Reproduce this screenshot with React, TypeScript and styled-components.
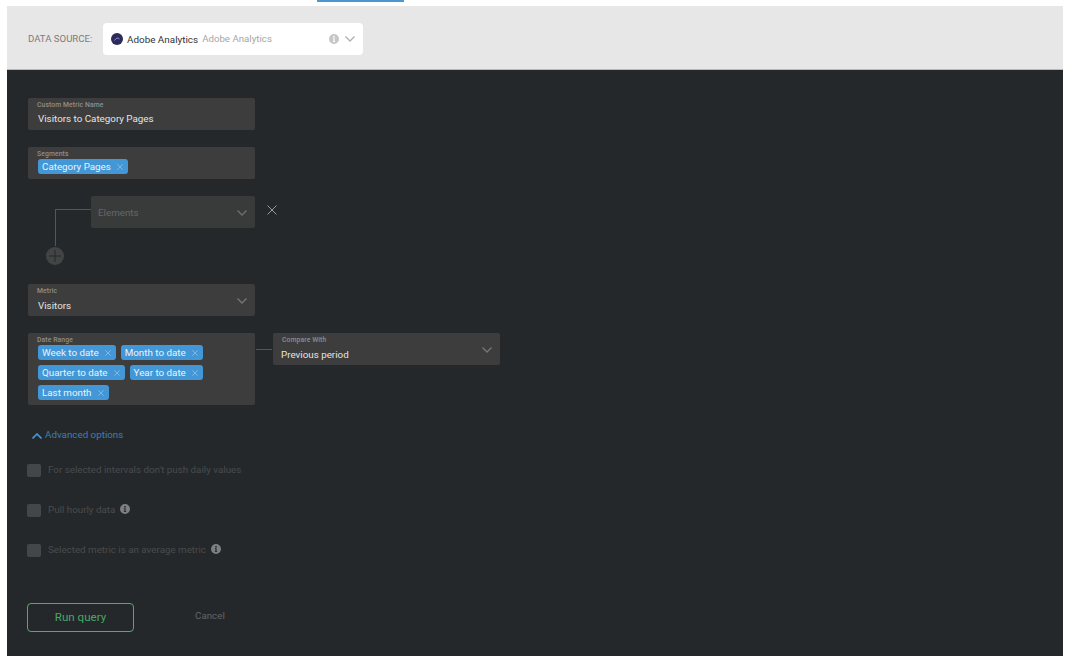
import React from 'react'
import styled, { createGlobalStyle } from 'styled-components'

const GlobalStyle = createGlobalStyle`
  html, body {
    margin: 0;
    padding: 0;
    background: #fff;
    font-family: Roboto, 'Liberation Sans', sans-serif;
  }
  * { box-sizing: border-box; }
`

const Page = styled.div`
  width: 1070px;
  height: 658px;
  overflow: hidden;
  position: relative;
  padding: 6px 7px 2px;
`

const TopTab = styled.div`
  position: absolute;
  left: 317px;
  top: 0;
  width: 87px;
  height: 2px;
  background: #4a98d3;
`

const Panel = styled.div`
  height: 650px;
  display: flex;
  flex-direction: column;
`

const SourceBar = styled.div`
  height: 64px;
  flex-shrink: 0;
  background: #e7e7e7;
  border-bottom: 1px solid #b9b9b9;
  display: flex;
  align-items: center;
  padding: 2px 0 0 21px;
`

const SourceLabel = styled.span`
  width: 75px;
  font-size: 9.6px;
  color: #7c7c7c;
`

const SourceSelect = styled.div`
  width: 260px;
  height: 32px;
  background: #fff;
  border-radius: 4px;
  display: flex;
  align-items: center;
  padding: 0 8px;
`

const SourceLogo = styled.svg`
  width: 12px;
  height: 12px;
  flex-shrink: 0;
  margin-right: 4px;
`

const SourceName = styled.span`
  font-size: 9.9px;
  color: #333;
  margin-top: 1px;
`

const SourceHint = styled.span`
  font-size: 9.7px;
  color: #a6a6a6;
  margin-left: 4px;
  flex: 1;
`

const SourceCaret = styled.svg`
  width: 10px;
  height: 6px;
  fill: none;
  stroke: #b0b0b0;
  stroke-width: 1.3;
`

const Body = styled.div`
  flex: 1;
  background: #25282b;
  padding: 28px 21px 0;
  display: flex;
  flex-direction: column;
  align-items: flex-start;
`

const Field = styled.div<{ $width?: number; $height?: number; $muted?: boolean }>`
  position: relative;
  width: ${({ $width }) => $width ?? 227}px;
  height: ${({ $height }) => $height ?? 32}px;
  background: ${({ $muted }) => ($muted ? '#393b3b' : '#3d3d3d')};
  border-radius: 2px;
  padding: 3px 10px 0 9px;
  flex-shrink: 0;
`

const FieldLabel = styled.div`
  font-size: 6.8px;
  line-height: 8px;
  font-weight: 500;
  letter-spacing: 0.1px;
  color: #8e8e8e;
`

const FieldValue = styled.div<{ $top?: number; $left?: number }>`
  font-size: 9.8px;
  line-height: 12px;
  color: #e4e4e4;
  margin-top: ${({ $top }) => $top ?? 5}px;
  margin-left: ${({ $left }) => $left ?? 1}px;
`

const Placeholder = styled.div`
  font-size: 9.8px;
  line-height: 12px;
  color: #666;
  margin-top: 8px;
  margin-left: -2px;
`

const Chips = styled.div`
  display: flex;
  flex-wrap: wrap;
  gap: 5px;
  margin-top: 1px;
  margin-left: 1px;
`

const Chip = styled.span`
  height: 15px;
  border-radius: 3px;
  background: #4497d6;
  color: #eaf3fa;
  font-size: 9.8px;
  line-height: 15px;
  padding: 0 5px 0 4px;
  display: inline-flex;
  align-items: center;
  gap: 6px;
  white-space: nowrap;
`

const ChipClose = styled.svg`
  width: 6px;
  height: 6px;
  stroke: #7fb8e3;
  stroke-width: 1;
  fill: none;
`

const Caret = styled.svg<{ $dim?: boolean }>`
  position: absolute;
  right: 8px;
  top: 14px;
  width: 10px;
  height: 6px;
  fill: none;
  stroke: ${({ $dim }) => ($dim ? '#6f6f6f' : '#777')};
  stroke-width: 1.3;
`

const ElementsBlock = styled.div`
  position: relative;
  margin-top: 17px;
  width: 260px;
  height: 71px;
  padding-left: 63px;
  display: flex;
  align-items: flex-start;
`

const BranchLine = styled.div`
  position: absolute;
  left: 27px;
  top: 13px;
  width: 36px;
  height: 37px;
  border-left: 1px solid #54575a;
  border-top: 1px solid #54575a;
`

const AddButton = styled.div`
  position: absolute;
  left: 18px;
  top: 51px;
  width: 18px;
  height: 18px;
  border-radius: 50%;
  background: #434445;
  display: flex;
  align-items: center;
  justify-content: center;
`

const PlusIcon = styled.svg`
  width: 12px;
  height: 12px;
  stroke: #25282b;
  stroke-width: 1;
`

const RemoveIcon = styled.svg`
  position: absolute;
  left: 239px;
  top: 9px;
  width: 10px;
  height: 10px;
  stroke: #9a9a9a;
  stroke-width: 1;
  fill: none;
`

const CompareRow = styled.div`
  display: flex;
  align-items: flex-start;
  margin-top: 17px;
`

const CompareLink = styled.div`
  width: 18px;
  height: 1px;
  margin-top: 16px;
  padding: 0 1px;
  &::after {
    content: '';
    display: block;
    height: 1px;
    background: #54575a;
  }
`

const Gap = styled.div<{ $size: number }>`
  height: ${({ $size }) => $size}px;
  flex-shrink: 0;
`

const AdvancedToggle = styled.div`
  margin-top: 23px;
  margin-left: 4px;
  height: 14px;
  display: flex;
  align-items: center;
  gap: 3px;
  font-size: 9.8px;
  line-height: 14px;
  color: #3d7fb2;
`

const AdvancedCaret = styled.svg`
  width: 10px;
  height: 6px;
  fill: none;
  stroke: #4497d6;
  stroke-width: 1.6;
  margin-top: 2px;
`

const Options = styled.div`
  margin-top: 21px;
  margin-left: -1px;
  display: flex;
  flex-direction: column;
  gap: 26px;
`

const Option = styled.div`
  display: flex;
  align-items: center;
  height: 14px;
`

const CheckBox = styled.span`
  width: 14px;
  height: 13px;
  border-radius: 2px;
  background: #44474a;
  margin-right: 7px;
  flex-shrink: 0;
`

const OptionText = styled.span`
  font-size: 9.8px;
  color: #484b4d;
  margin-top: -2px;
`

const InfoIcon = styled.svg<{ $light?: boolean }>`
  width: 10px;
  height: 10px;
  margin: ${({ $light }) => ($light ? '0 6px 0 0' : '-2px 0 0 5px')};
  fill: ${({ $light }) => ($light ? '#c6c6c6' : '#7d7f80')};
  flex-shrink: 0;
`

const Actions = styled.div`
  margin-top: 46px;
  margin-left: -1px;
  display: flex;
  align-items: center;
`

const RunButton = styled.button`
  width: 107px;
  height: 29px;
  border: 1px solid #4aae6a;
  border-radius: 4px;
  background: transparent;
  color: #46a765;
  font-family: inherit;
  font-size: 11.6px;
  padding: 0 0 2px;
`

const CancelButton = styled.span`
  margin: -4px 0 0 61px;
  font-size: 9.8px;
  color: #626567;
`

const Info = ({ light }: { light?: boolean }) => (
  <InfoIcon $light={light} viewBox="0 0 10 10">
    <path
      fillRule="evenodd"
      d="M5 0a5 5 0 1 1 0 10A5 5 0 0 1 5 0ZM4.2 2v1.4h1.6V2H4.2ZM3.8 4.2v.9h.6v2.1h-.6V8h2.4v-.8h-.6V4.2H3.8Z"
    />
  </InfoIcon>
)

const ChevronDown = ({ dim }: { dim?: boolean }) => (
  <Caret $dim={dim} viewBox="0 0 10 6">
    <path d="M.5.5 5 5 9.5.5" />
  </Caret>
)

const TagChip = ({ label }: { label: string }) => (
  <Chip>
    {label}
    <ChipClose viewBox="0 0 6 6">
      <path d="M.3.3l5.4 5.4M5.7.3.3 5.7" />
    </ChipClose>
  </Chip>
)

const dateRanges = ['Week to date', 'Month to date', 'Quarter to date', 'Year to date', 'Last month']

export default function App() {
  return (
    <>
      <GlobalStyle />
      <Page>
        <TopTab />
        <Panel>
          <SourceBar>
            <SourceLabel>DATA SOURCE:</SourceLabel>
            <SourceSelect>
              <SourceLogo viewBox="0 0 12 12">
                <circle cx="6" cy="6" r="6" fill="#2d2a5c" />
                <path d="M3.5 7.5 Q6 3.5 8.5 6" stroke="#8f8cc0" strokeWidth="1" fill="none" />
              </SourceLogo>
              <SourceName>Adobe Analytics</SourceName>
              <SourceHint>Adobe Analytics</SourceHint>
              <Info light />
              <SourceCaret viewBox="0 0 10 6">
                <path d="M.5.5 5 5 9.5.5" />
              </SourceCaret>
            </SourceSelect>
          </SourceBar>
          <Body>
            <Field>
              <FieldLabel>Custom Metric Name</FieldLabel>
              <FieldValue $top={4}>Visitors to Category Pages</FieldValue>
            </Field>
            <Gap $size={17} />
            <Field>
              <FieldLabel>Segments</FieldLabel>
              <Chips>
                <TagChip label="Category Pages" />
              </Chips>
            </Field>
            <ElementsBlock>
              <BranchLine />
              <AddButton>
                <PlusIcon viewBox="0 0 12 12">
                  <path d="M6 0v12M0 6h12" />
                </PlusIcon>
              </AddButton>
              <Field $width={164} $muted>
                <Placeholder>Elements</Placeholder>
                <ChevronDown dim />
              </Field>
              <RemoveIcon viewBox="0 0 10 10">
                <path d="M.5.5l9 9M9.5.5l-9 9" />
              </RemoveIcon>
            </ElementsBlock>
            <Gap $size={17} />
            <Field>
              <FieldLabel>Metric</FieldLabel>
              <FieldValue>Visitors</FieldValue>
              <ChevronDown />
            </Field>
            <CompareRow>
              <Field $height={72}>
                <FieldLabel>Date Range</FieldLabel>
                <Chips>
                  {dateRanges.map((label) => (
                    <TagChip key={label} label={label} />
                  ))}
                </Chips>
              </Field>
              <CompareLink />
              <Field>
                <FieldLabel>Compare With</FieldLabel>
                <FieldValue $left={-1}>Previous period</FieldValue>
                <ChevronDown />
              </Field>
            </CompareRow>
            <AdvancedToggle>
              <AdvancedCaret viewBox="0 0 10 6">
                <path d="M.5 5.5 5 1l4.5 4.5" />
              </AdvancedCaret>
              Advanced options
            </AdvancedToggle>
            <Options>
              <Option>
                <CheckBox />
                <OptionText>For selected intervals don't push daily values</OptionText>
              </Option>
              <Option>
                <CheckBox />
                <OptionText>Pull hourly data</OptionText>
                <Info />
              </Option>
              <Option>
                <CheckBox />
                <OptionText>Selected metric is an average metric</OptionText>
                <Info />
              </Option>
            </Options>
            <Actions>
              <RunButton>Run query</RunButton>
              <CancelButton>Cancel</CancelButton>
            </Actions>
          </Body>
        </Panel>
      </Page>
    </>
  )
}
